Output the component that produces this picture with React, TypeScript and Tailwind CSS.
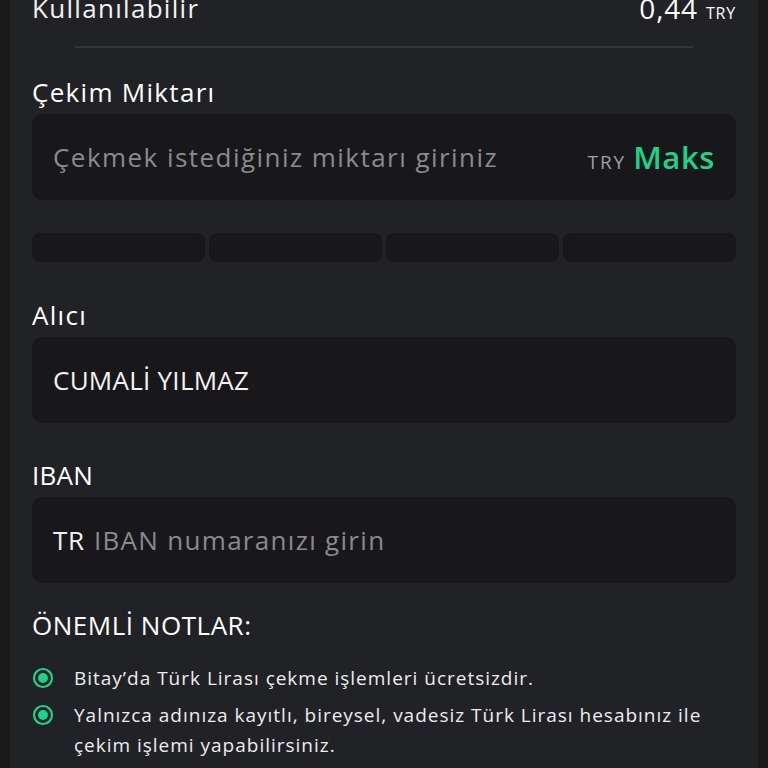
import React from 'react';

const font = { fontFamily: '"Open Sans", "Noto Sans", sans-serif' };

const Notes = [
  'Bitay’da Türk Lirası çekme işlemleri ücretsizdir.',
  'Yalnızca adınıza kayıtlı, bireysel, vadesiz Türk Lirası hesabınız ile çekim işlemi yapabilirsiniz.',
];

const Bullet = () => (
  <svg width="22" height="22" viewBox="0 0 22 22" className="shrink-0">
    <circle cx="11" cy="11" r="9" fill="none" stroke="#1fd18b" strokeWidth="2.2" />
    <circle cx="11" cy="11" r="5" fill="#1fd18b" />
  </svg>
);

const App: React.FC = () => {
  return (
    <div className="h-[768px] w-[768px] overflow-hidden bg-[#19191a] px-[10px]" style={font}>
      <div className="flex h-full flex-col bg-[#212226] px-[22px] text-white">
        <div className="-mt-[12px] flex items-end justify-between">
          <span className="text-[26px] leading-[40px] tracking-[0.05em] text-[#f2f2f2]">Kullanılabilir</span>
          <span className="flex items-baseline gap-[8px]">
            <span className="text-[28px] leading-[40px] tracking-[0.03em]">0,44</span>
            <span className="text-[16px] tracking-[0.05em]">TRY</span>
          </span>
        </div>
        <div className="mx-[43px] mt-[18px] h-[2px] bg-[#34353a]" />

        <div className="mt-[26px] text-[26px] leading-[36px] tracking-[0.05em]">Çekim Miktarı</div>
        <div className="mt-[4px] flex h-[86px] items-center justify-between rounded-[10px] bg-[#18181a] px-[21px]">
          <span className="text-[26px] tracking-[0.056em] text-[#8a8a8c]">Çekmek istediğiniz miktarı giriniz</span>
          <span className="flex items-baseline gap-[7px]">
            <span className="text-[19px] tracking-[0.1em] text-[#a0a0a2]">TRY</span>
            <span className="text-[31px] font-semibold tracking-[0.02em] text-[#1fd18b]">Maks</span>
          </span>
        </div>

        <div className="mt-[33px] grid grid-cols-4 gap-[4px]">
          <div className="h-[29px] rounded-[8px] bg-[#18181a]" />
          <div className="h-[29px] rounded-[8px] bg-[#18181a]" />
          <div className="h-[29px] rounded-[8px] bg-[#18181a]" />
          <div className="h-[29px] rounded-[8px] bg-[#18181a]" />
        </div>

        <div className="mt-[35px] text-[26px] leading-[36px] tracking-[0.05em]">Alıcı</div>
        <div className="mt-[4px] flex h-[86px] items-center rounded-[10px] bg-[#18181a] px-[21px]">
          <span className="text-[26px] tracking-[0.01em] text-[#f2f2f2]">CUMALİ YILMAZ</span>
        </div>

        <div className="mt-[34px] text-[26px] leading-[36px] tracking-[0.01em]">IBAN</div>
        <div className="mt-[4px] flex h-[86px] items-center gap-[9px] rounded-[10px] bg-[#18181a] px-[21px]">
          <span className="text-[26px] tracking-[0.03em] text-[#f2f2f2]">TR</span>
          <span className="text-[26px] tracking-[0.05em] text-[#8a8a8c]">IBAN numaranızı girin</span>
        </div>

        <div className="mt-[24px] text-[26px] leading-[36px] tracking-[0.02em]">ÖNEMLİ NOTLAR:</div>
        <ul className="mt-[20px] flex flex-col gap-[7px]">
          {Notes.map((n) => (
            <li key={n} className="flex items-start gap-[20px] pr-[20px]">
              <span className="mt-[4px]"><Bullet /></span>
              <span className="text-[19px] leading-[30px] tracking-[0.052em] text-[#ededed]">{n}</span>
            </li>
          ))}
        </ul>
      </div>
    </div>
  );
};

export default App;
